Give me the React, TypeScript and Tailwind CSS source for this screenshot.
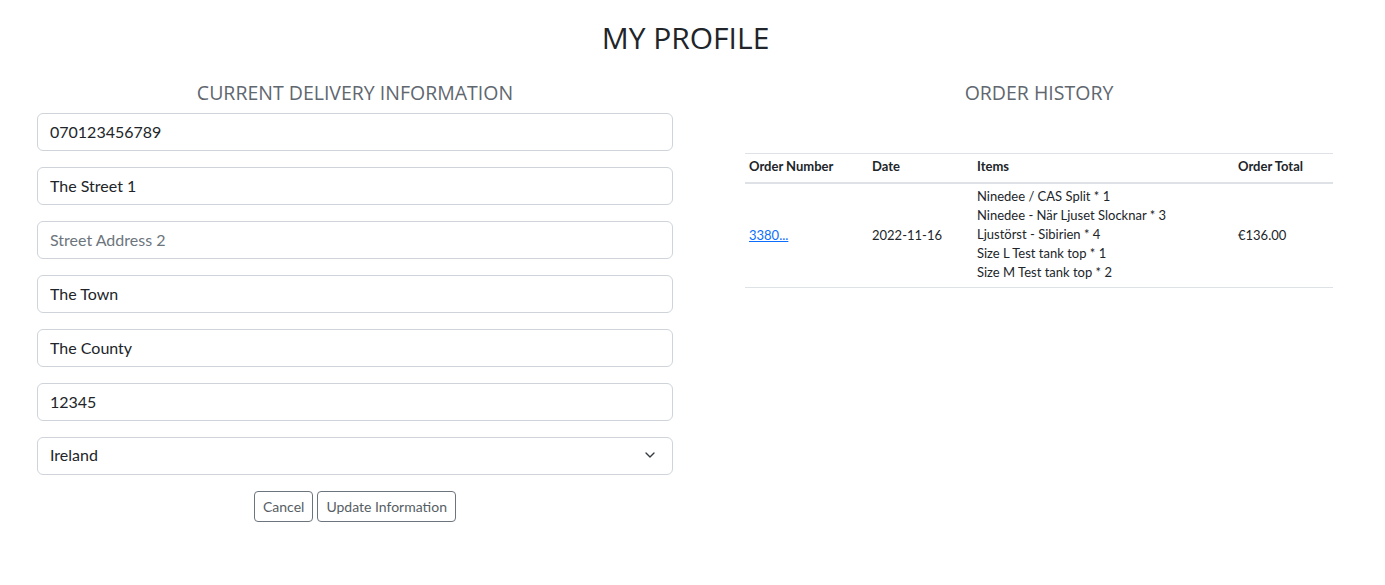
import { ChevronDown } from 'lucide-react';

const fields = [
	{ value: '070123456789' },
	{ value: 'The Street 1' },
	{ value: '', placeholder: 'Street Address 2' },
	{ value: 'The Town' },
	{ value: 'The County' },
	{ value: '12345' },
];

const items = [
	'Ninedee / CAS Split * 1',
	'Ninedee - När Ljuset Slocknar * 3',
	'Ljustörst - Sibirien * 4',
	'Size L Test tank top * 1',
	'Size M Test tank top * 2',
];

export default function App() {
	return (
		<div className="w-[1385px] h-[585px] bg-white text-[#212529] font-['Lato','Noto_Sans',sans-serif]">
			<h1 className="pt-[20px] pr-[14px] h-[60px] text-center text-[30px] leading-[36px] font-normal text-[#212529] font-['Open_Sans','Noto_Sans',sans-serif]">
				MY PROFILE
			</h1>

			<div className="flex">
				{/* Delivery form */}
				<div className="w-[636px] ml-[37px]">
					<h2 className="h-[53px] pt-[21px] text-center text-[19.5px] leading-[24px] text-[#5f676f] font-['Open_Sans','Noto_Sans',sans-serif]">
						CURRENT DELIVERY INFORMATION
					</h2>
					<div className="flex flex-col gap-[16px]">
						{fields.map((f, i) => (
							<input
								key={i}
								defaultValue={f.value}
								placeholder={f.placeholder}
								className="h-[38px] w-full px-[12px] pb-[2px] border border-[#ced4da] rounded-[6px] text-[16px] text-[#212529] placeholder:text-[#6c757d] outline-none"
							/>
						))}
						<div className="relative h-[38px] w-full border border-[#ced4da] rounded-[6px] flex items-center px-[12px] pb-[2px] text-[16px]">
							<span>Ireland</span>
							<ChevronDown size={16} strokeWidth={2} className="absolute right-[14px] text-[#343a40]" />
						</div>
					</div>
					<div className="flex justify-center gap-[4px] mt-[16px]">
						<button className="h-[31px] px-[8px] border border-[#6c757d] rounded-[4px] text-[14px] text-[#565e64]">
							Cancel
						</button>
						<button className="h-[31px] px-[8px] border border-[#6c757d] rounded-[4px] text-[14px] text-[#565e64]">
							Update Information
						</button>
					</div>
				</div>

				{/* Order history */}
				<div className="w-[588px] ml-[72px]">
					<h2 className="h-[40px] pt-[21px] text-center text-[19.5px] leading-[24px] text-[#5f676f] font-['Open_Sans','Noto_Sans',sans-serif]">
						ORDER HISTORY
					</h2>
					<table className="mt-[53px] w-full text-[13px] border-t border-[#dee2e6] border-collapse">
						<thead>
							<tr className="border-b-2 border-[#dee2e6]">
								<th className="w-[123px] text-left font-bold px-[4px] pt-[3px] pb-[6px] leading-[19px]">Order Number</th>
								<th className="w-[105px] text-left font-bold px-[4px] pt-[3px] pb-[6px] leading-[19px]">Date</th>
								<th className="w-[261px] text-left font-bold px-[4px] pt-[3px] pb-[6px] leading-[19px]">Items</th>
								<th className="text-left font-bold px-[4px] pt-[3px] pb-[6px] leading-[19px]">Order Total</th>
							</tr>
						</thead>
						<tbody>
							<tr className="border-b border-[#dee2e6]">
								<td className="px-[4px] py-[4px] align-middle">
									<a href="#" className="text-[#0d6efd] underline">3380...</a>
								</td>
								<td className="px-[4px] py-[4px] align-middle">2022-11-16</td>
								<td className="px-[4px] pt-[3px] pb-[5px] align-middle leading-[19px]">
									{items.map((it) => (
										<div key={it}>{it}</div>
									))}
								</td>
								<td className="px-[4px] py-[4px] align-middle">€136.00</td>
							</tr>
						</tbody>
					</table>
				</div>
			</div>
		</div>
	);
}
